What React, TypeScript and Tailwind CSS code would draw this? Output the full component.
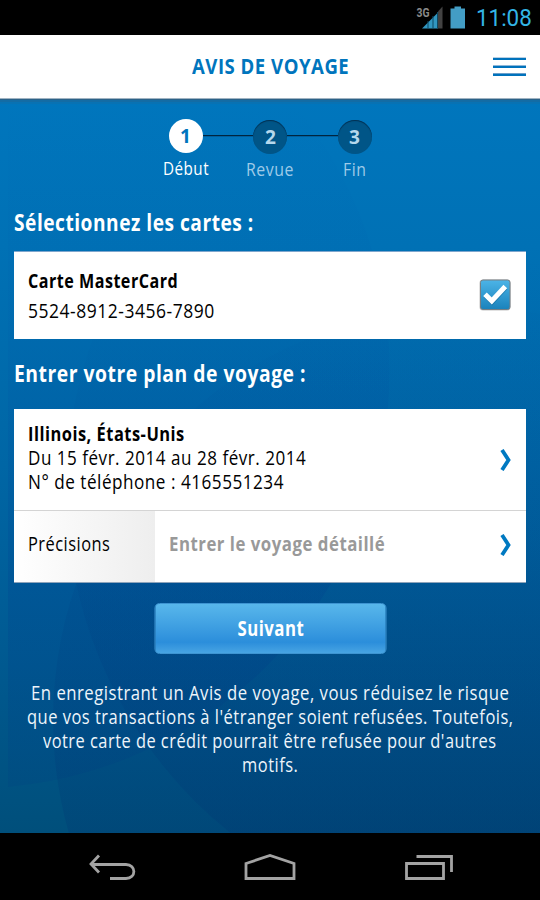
import { ReactNode, useLayoutEffect, useRef, useState } from "react";

// Condenses a line of text horizontally so that it spans the given width.
function Fit({ w, className = "", children }: { w: number; className?: string; children: ReactNode }) {
  const ref = useRef<HTMLSpanElement>(null);
  const [scale, setScale] = useState(1);
  useLayoutEffect(() => {
    if (ref.current) setScale(w / ref.current.offsetWidth);
  }, [w]);
  return (
    <span className={`block shrink-0 text-left whitespace-nowrap ${className}`} style={{ width: w }}>
      <span ref={ref} className="inline-block origin-left" style={{ transform: `scaleX(${scale})` }}>
        {children}
      </span>
    </span>
  );
}

function StatusBar() {
  return (
    <div className="flex h-[35px] shrink-0 items-center justify-end bg-black pr-[8px]">
      <svg width="28" height="24" viewBox="0 0 28 24" className="mr-[6px]">
        <text x="0.500" y="10.500" fontSize="12.500" fontWeight="700" fill="#8a8a8a" textLength="13" lengthAdjust="spacingAndGlyphs" fontFamily="Roboto, sans-serif">3G</text>
        <path d="M6 22.500 L22 6.500 V22.500 Z" fill="#3196c0" />
        <path d="M22 5.500 L26.500 0.500 V22.500 H22 Z" fill="#424242" />
        <path d="M12 15V22.500M17 10V22.500M21.500 6V22.500" stroke="#0d4963" strokeWidth="1" />
      </svg>
      <svg width="16" height="24" viewBox="0 0 16 24" className="mr-[10px]">
        <path d="M4.500 0.500 H11 V2.500 H15 V22.500 H0.500 V2.500 H4.500 Z" fill="#439dc5" />
      </svg>
      <Fit w={56} className="pt-px font-['Roboto',sans-serif] text-[24px] leading-[35px] text-[#33b5e5]">11:08</Fit>
    </div>
  );
}

function Backdrop() {
  return (
    <svg className="absolute inset-0" width="540" height="734" viewBox="0 99 540 734">
      <defs>
        <linearGradient id="sky" x1="0" y1="0" x2="0" y2="1">
          <stop offset="0" stopColor="#0076bd" />
          <stop offset="0.2" stopColor="#0071b5" />
          <stop offset="0.5" stopColor="#0066a5" />
          <stop offset="0.75" stopColor="#005a92" />
          <stop offset="1" stopColor="#004f7b" />
        </linearGradient>
        <linearGradient id="shade" gradientUnits="userSpaceOnUse" x1="0" y1="99" x2="0" y2="833">
          <stop offset="0" stopColor="#004ea8" stopOpacity="0" />
          <stop offset="0.3" stopColor="#004ea8" stopOpacity="0.08" />
          <stop offset="0.65" stopColor="#003c90" stopOpacity="0.22" />
          <stop offset="1" stopColor="#003a80" stopOpacity="0.16" />
        </linearGradient>
        <linearGradient id="deep" gradientUnits="userSpaceOnUse" x1="0" y1="250" x2="0" y2="833">
          <stop offset="0" stopColor="#003c90" stopOpacity="0" />
          <stop offset="0.5" stopColor="#003880" stopOpacity="0.09" />
          <stop offset="1" stopColor="#003070" stopOpacity="0.22" />
        </linearGradient>
        <clipPath id="inner"><rect x="8" y="99" width="532" height="734" /></clipPath>
      </defs>
      <rect y="99" width="540" height="734" fill="url(#sky)" />
      <g clipPath="url(#inner)">
        <circle cx="-29" cy="370" r="418.600" fill="url(#shade)" />
        <circle cx="506" cy="490" r="440" fill="url(#deep)" />
        <circle cx="466" cy="720" r="413" fill="url(#deep)" />
      </g>
      <rect y="99" width="540" height="1" fill="#2b6288" />
      <rect y="100" width="540" height="2" fill="#136ca5" />
      <rect y="102" width="540" height="2" fill="#0872b3" />
    </svg>
  );
}

function Step({ n, active = false }: { n: string; active?: boolean }) {
  return (
    <div
      className={
        active
          ? "flex size-[34px] items-center justify-center rounded-full bg-white pb-px text-[20px] leading-none font-bold text-[#0075bd]"
          : "flex size-[34px] translate-y-px items-center justify-center rounded-full bg-[#005587] pb-px text-[20px] leading-none font-bold text-[#b5d8ec] shadow-[inset_0_1px_1px_#002f50]"
      }
    >
      <Fit w={10.5}>{n}</Fit>
    </div>
  );
}

function Chevron() {
  return (
    <svg width="12" height="22" viewBox="0 0 12 22" className="mr-[14px] ml-auto">
      <path d="M2 1 L8.500 11 L2 21" fill="none" stroke="#0079c1" strokeWidth="3.800" />
    </svg>
  );
}

export default function App() {
  return (
    <div className="flex h-[900px] w-[540px] flex-col overflow-hidden bg-black font-['Open_Sans','Noto_Sans',sans-serif]">
      <StatusBar />
      <header className="grid h-[64px] shrink-0 grid-cols-[1fr_auto_1fr] items-center border-b border-[#9fb3c2] bg-white">
        <span />
        <Fit w={157} className="pb-[4px] text-[22px] leading-[30px] font-bold tracking-[0.6px] text-[#0075bd]">AVIS DE VOYAGE</Fit>
        <div className="mr-[14px] flex w-[33px] flex-col gap-[5px] justify-self-end">
          <i className="h-[3px] border-t border-[#b8cfe2] bg-[#0072bc]" />
          <i className="h-[3px] border-t border-[#8fb7d8] bg-[#0072bc]" />
          <i className="h-[3px] border-t border-[#6a9fcb] bg-[#0072bc]" />
        </div>
      </header>

      <main className="relative h-[734px] shrink-0">
        <Backdrop />
        <div className="relative flex flex-col">
          <div className="flex items-center justify-center pt-[20px]">
            <Step n="1" active />
            <div className="h-[2px] w-[50.500px] border-t border-[#00253f] bg-[#005f9d]" />
            <Step n="2" />
            <div className="h-[2px] w-[50.500px] border-t border-[#00253f] bg-[#005f9d]" />
            <Step n="3" />
          </div>
          <div className="mx-auto grid h-[34px] grid-cols-[84.5px_84.5px_84.5px] justify-items-center text-[18.500px] leading-[30px] tracking-[0.6px] text-[#9fcbe8]">
            <Fit w={46} className="text-white">Début</Fit>
            <Fit w={48} className="pt-px">Revue</Fit>
            <Fit w={23} className="pt-px">Fin</Fit>
          </div>

          <h2 className="mt-[20px] ml-[14px] text-[22.500px] leading-[32px] font-bold tracking-[0.6px] text-white">
            <Fit w={240}>Sélectionnez les cartes :</Fit>
          </h2>
          <section className="mx-[14px] mt-[12px] flex h-[88px] items-center border-t border-[#7ea6cd] bg-white pl-[14px] text-black">
            <div className="text-[20px] leading-[30px] tracking-[0.6px]">
              <Fit w={150} className="font-bold">Carte MasterCard</Fit>
              <Fit w={187}>5524-8912-3456-7890</Fit>
            </div>
            <svg width="34" height="34" viewBox="0 0 34 34" className="mr-[14px] mb-[2px] ml-auto">
              <defs>
                <linearGradient id="check" x1="0" y1="0" x2="0" y2="1">
                  <stop offset="0" stopColor="#4cb4e7" />
                  <stop offset="1" stopColor="#1a82bb" />
                </linearGradient>
              </defs>
              <rect x="1.500" y="1.500" width="31" height="31" rx="3.500" fill="#c4c4c4" />
              <rect x="2.500" y="2" width="29.500" height="29.500" rx="2.500" fill="url(#check)" stroke="#777f84" />
              <path d="M7.500 17.500 L14 24 L27.500 9.500" fill="none" stroke="#0d608f" strokeOpacity="0.5" strokeWidth="5" />
              <path d="M7 16.200 L13.800 23 L27.300 8.500" fill="none" stroke="#fff" strokeWidth="5" />
            </svg>
          </section>

          <h2 className="mt-[19px] ml-[14px] text-[22.500px] leading-[32px] font-bold tracking-[0.6px] text-white">
            <Fit w={292}>Entrer votre plan de voyage :</Fit>
          </h2>
          <section className="mx-[14px] mt-[19px] flex h-[174px] flex-col border-b border-[#8ea4bb] bg-white text-black">
            <div className="flex h-[102px] shrink-0 items-center border-b border-[#d4d4d4] pl-[14px] text-[20px] leading-[24px] tracking-[0.6px]">
              <div className="pb-[3px]">
                <Fit w={157} className="font-bold">Illinois, États-Unis</Fit>
                <Fit w={278}>Du 15 févr. 2014 au 28 févr. 2014</Fit>
                <Fit w={256}>N° de téléphone : 4165551234</Fit>
              </div>
              <Chevron />
            </div>
            <div className="flex h-[71px] items-center text-[20px] leading-[24px] tracking-[0.6px]">
              <div className="flex h-[71px] w-[141px] items-center bg-linear-to-r from-white to-[#eeeeee] pb-[5px] pl-[14px]">
                <Fit w={82}>Précisions</Fit>
              </div>
              <Fit w={216} className="ml-[14px] pb-[5px] font-bold text-[#999999]">Entrer le voyage détaillé</Fit>
              <div className="ml-auto pb-[4px]"><Chevron /></div>
            </div>
          </section>

          <button className="mx-auto mt-[20px] flex h-[51px] w-[232px] translate-x-[0.500px] items-center justify-center rounded-[5px] border border-[#3d94d2] bg-linear-to-b from-[#58b7eb] from-0% via-[#2b8edb] via-78% to-[#47a4e3] text-[20.500px] font-bold tracking-[0.6px] text-white">
            <Fit w={67}>Suivant</Fit>
          </button>

          <div className="mt-[27px] flex flex-col items-center text-[20px] leading-[24px] tracking-[0.6px] text-[#eef5fb]">
            <Fit w={478}>En enregistrant un Avis de voyage, vous réduisez le risque</Fit>
            <Fit w={487}>que vos transactions à l'étranger soient refusées. Toutefois,</Fit>
            <Fit w={454}>votre carte de crédit pourrait être refusée pour d'autres</Fit>
            <Fit w={56}>motifs.</Fit>
          </div>
        </div>
      </main>

      <nav className="flex h-[67px] shrink-0 items-center justify-center gap-[108px] pt-[3px] pl-[2px]">
        <svg width="48" height="28" viewBox="0 0 48 28" fill="none" stroke="#a3a3a3" strokeWidth="2.800">
          <path d="M11 1.500 L3 10 L11 18.500" />
          <path d="M3 10.500 H38 C48.500 10.500 48.500 24.500 38 24.500 H22" />
        </svg>
        <svg width="52" height="28" viewBox="0 0 52 28" fill="none" stroke="#a3a3a3" strokeWidth="2.800">
          <path d="M2 9.500 L26 1.500 L50 9.500 V24.500 H2 Z" />
        </svg>
        <svg width="50" height="28" viewBox="0 0 50 28" fill="none" stroke="#a3a3a3" strokeWidth="2.800">
          <path d="M2.500 9.500 H39.500 V24.500 H2.500 Z M12.500 2.500 H47.500 V18" />
        </svg>
      </nav>
    </div>
  );
}
